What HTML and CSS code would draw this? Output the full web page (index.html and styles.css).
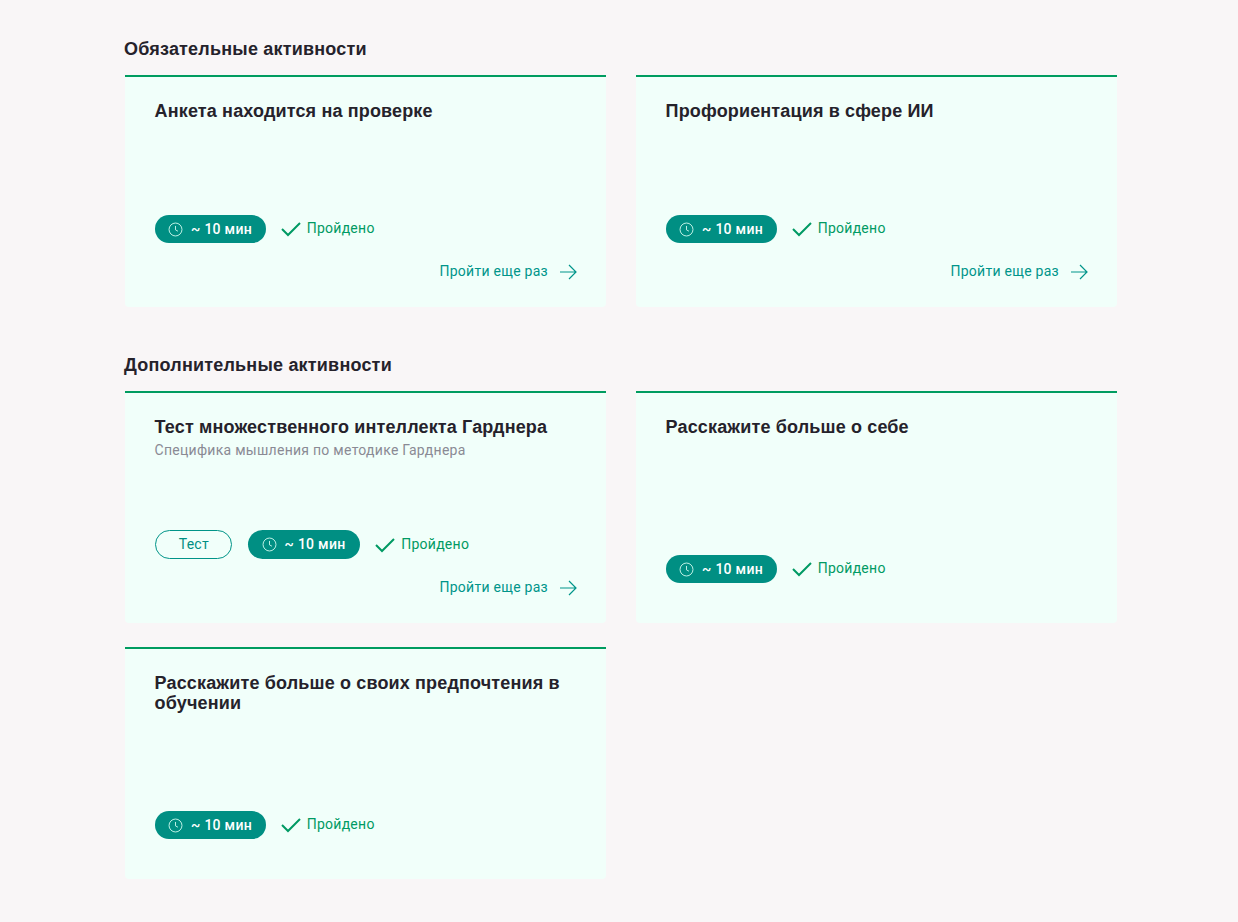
FILE: index.html
```html
<!DOCTYPE html>
<html lang="ru">
<head>
    <meta charset="UTF-8">
    <title>Активности</title>
    <link rel="stylesheet" href="styles.css">
</head>
<body>

<svg class="icon-defs" width="0" height="0">
    <symbol id="clock" viewBox="0 0 16 16">
        <circle cx="8" cy="8" r="6.9" fill="none" stroke="currentColor" stroke-width="1"/>
        <path d="M8 4.2V8.4L10.6 9.8" fill="none" stroke="currentColor" stroke-width="1"/>
    </symbol>
    <symbol id="check" viewBox="0 0 20 16">
        <path d="M1 8L7 14L19 2" fill="none" stroke="currentColor" stroke-width="2"/>
    </symbol>
    <symbol id="arrow" viewBox="0 0 18 16">
        <path d="M1 8H17M10 1L17 8L10 15" fill="none" stroke="currentColor" stroke-width="1.2"/>
    </symbol>
</svg>

<div class="container">
    <h2 class="section-title">Обязательные активности</h2>
    <div class="cards">
        <div class="card">
            <div class="card-title">Анкета находится на проверке</div>
            <div class="meta">
                <span class="time"><svg class="clock"><use href="#clock"/></svg>~ 10 мин</span>
                <span class="done"><svg class="check"><use href="#check"/></svg>Пройдено</span>
            </div>
            <a class="again" href="#">Пройти еще раз<svg class="arrow"><use href="#arrow"/></svg></a>
        </div>
        <div class="card">
            <div class="card-title">Профориентация в сфере ИИ</div>
            <div class="meta">
                <span class="time"><svg class="clock"><use href="#clock"/></svg>~ 10 мин</span>
                <span class="done"><svg class="check"><use href="#check"/></svg>Пройдено</span>
            </div>
            <a class="again" href="#">Пройти еще раз<svg class="arrow"><use href="#arrow"/></svg></a>
        </div>
    </div>

    <h2 class="section-title">Дополнительные активности</h2>
    <div class="cards">
        <div class="card">
            <div class="card-title">Тест множественного интеллекта Гарднера</div>
            <div class="card-sub">Специфика мышления по методике Гарднера</div>
            <div class="meta">
                <span class="tag">Тест</span>
                <span class="time"><svg class="clock"><use href="#clock"/></svg>~ 10 мин</span>
                <span class="done"><svg class="check"><use href="#check"/></svg>Пройдено</span>
            </div>
            <a class="again" href="#">Пройти еще раз<svg class="arrow"><use href="#arrow"/></svg></a>
        </div>
        <div class="card">
            <div class="card-title">Расскажите больше о себе</div>
            <div class="meta">
                <span class="time"><svg class="clock"><use href="#clock"/></svg>~ 10 мин</span>
                <span class="done"><svg class="check"><use href="#check"/></svg>Пройдено</span>
            </div>
        </div>
        <div class="card">
            <div class="card-title">Расскажите больше о своих предпочтения в обучении</div>
            <div class="meta">
                <span class="time"><svg class="clock"><use href="#clock"/></svg>~ 10 мин</span>
                <span class="done"><svg class="check"><use href="#check"/></svg>Пройдено</span>
            </div>
        </div>
    </div>
</div>

</body>
</html>
```

FILE: styles.css
```css
body {
    margin: 0;
    background-color: #f9f6f7;
    font-family: Roboto, sans-serif;
    letter-spacing: 0.27px;
    color: #25222b;
}

.icon-defs {
    position: absolute;
}

.container {
    width: 993px;
    margin-left: 125px;
    padding-top: 38px;
    padding-bottom: 42px;
}

.section-title {
    margin: 0 0 14px -1px;
    font-family: "Liberation Sans", sans-serif;
    font-size: 18px;
    line-height: 23px;
    font-weight: bold;
    letter-spacing: 0.2px;
}

.cards {
    display: grid;
    grid-template-columns: 481px 481px;
    column-gap: 30px;
    row-gap: 24px;
    margin-bottom: 47px;
}

.cards:last-child {
    margin-bottom: 0;
}

.card {
    display: flex;
    flex-direction: column;
    box-sizing: border-box;
    min-height: 232px;
    padding: 24px 29px 24px 29.6px;
    background-color: #f1fffa;
    border-top: 2px solid #009c60;
    border-radius: 0 0 4px 4px;
}

.card-title {
    font-family: "Liberation Sans", sans-serif;
    font-size: 18px;
    line-height: 20px;
    font-weight: bold;
    letter-spacing: 0.15px;
}

.card-sub {
    margin-top: 5px;
    font-size: 14px;
    line-height: 16px;
    color: #8a8a94;
}

.meta {
    display: flex;
    align-items: center;
    margin-top: auto;
    margin-bottom: 16px;
}

.time {
    display: flex;
    align-items: center;
    box-sizing: border-box;
    height: 28px;
    padding: 0 13.75px 0 13.5px;
    border-radius: 14px;
    background-color: #008f83;
    color: #fff;
    font-size: 14px;
    font-weight: 500;
    white-space: nowrap;
}

.clock {
    width: 15px;
    height: 15px;
    margin-right: 8px;
    color: #c8f5ea;
}

.tag {
    display: flex;
    align-items: center;
    justify-content: center;
    box-sizing: border-box;
    width: 77.5px;
    height: 29px;
    margin-right: 16px;
    padding: 0 0 2px 1px;
    border: 1.2px solid #009488;
    border-radius: 15px;
    color: #008f83;
    font-size: 14px;
}

.tag + .time {
    height: 29px;
    padding-right: 14.75px;
    padding-bottom: 1px;
    border-radius: 15px;
}

.done {
    display: flex;
    align-items: center;
    margin-left: 15px;
    padding-bottom: 2px;
    color: #009a63;
    font-size: 14px;
}

.check {
    width: 20px;
    height: 16px;
    margin-top: 2px;
    margin-right: 6px;
}

.again {
    display: flex;
    align-items: center;
    justify-content: flex-end;
    height: 24px;
    color: #00958a;
    font-size: 14px;
    text-decoration: none;
}

.arrow {
    width: 18px;
    height: 16px;
    margin-top: 1px;
    margin-left: 11px;
}
```
